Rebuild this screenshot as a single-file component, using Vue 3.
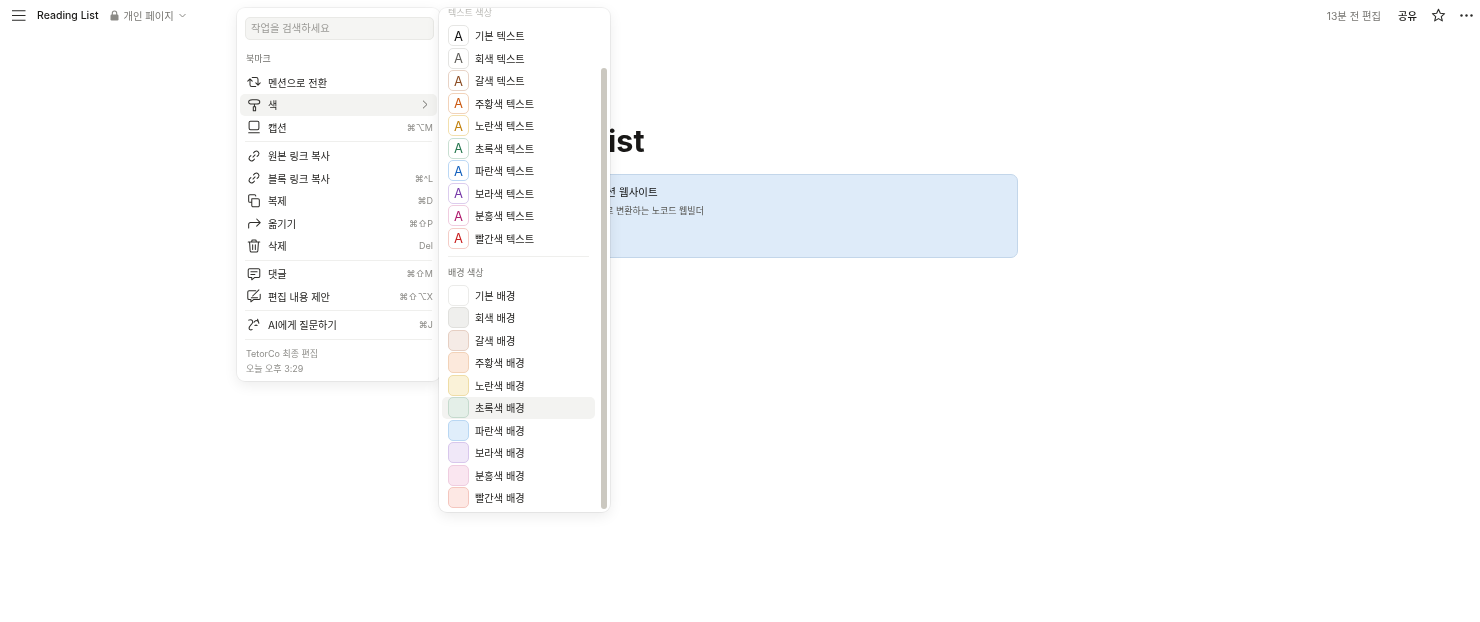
<script setup>
const I = {
  turn: 'M2 8l2.500-2.500L7 8M4.500 6v6A2 2 0 0 0 6.500 14H11M16 10l-2.500 2.500L11 10M13.500 12V6A2 2 0 0 0 11.500 4H7',
  color: 'M3 5.500C3 3.800 5 3 7 3h5c2 0 3.500 1 3.500 2.500S14 8 12 8H7C5 8 3 7.200 3 5.500zM9.500 8v3M8.200 11h2.600v4.500H8.200z',
  caption: 'M5 2.500h8A1.500 1.500 0 0 1 14.500 4v6.500A1.500 1.500 0 0 1 13 12H5a1.500 1.500 0 0 1-1.500-1.500V4A1.500 1.500 0 0 1 5 2.500zM3 15.500h12',
  link: 'M7.800 10.200l2.400-2.400M8.500 5.500l1.600-1.600a2.900 2.900 0 0 1 4 4l-1.600 1.600M9.500 12.500l-1.600 1.600a2.900 2.900 0 0 1-4-4l1.600-1.600',
  copy: 'M6.500 6.500h7A1.500 1.500 0 0 1 15 8v6a1.500 1.500 0 0 1-1.500 1.500h-5.500A1.500 1.500 0 0 1 6.500 14zM11 3.500V3.300A1.300 1.300 0 0 0 9.700 2H4.300A1.300 1.300 0 0 0 3 3.300v6A1.300 1.300 0 0 0 4.300 10.500H6.500',
  move: 'M3 14.500V10.500A2 2 0 0 1 5 8.500h11M12 4.500l4 4-4 4',
  trash: 'M2.500 4.500h13M6.500 4.500V3.300A1 1 0 0 1 7.500 2.300h3a1 1 0 0 1 1 1v1.200M4 4.500l.7 10a1.500 1.500 0 0 0 1.500 1.300h5.600a1.500 1.500 0 0 0 1.500-1.300l.7-10M7.500 7.500v5.500M10.500 7.500v5.500',
  comment: 'M4 3h10a1.500 1.500 0 0 1 1.500 1.500v7A1.500 1.500 0 0 1 14 13H9.500l-3 2.500V13H4a1.500 1.500 0 0 1-1.500-1.500v-7A1.500 1.500 0 0 1 4 3zM5.500 6.500h7M5.500 9.500h4.500',
  suggest: 'M11 3H3.500A1.500 1.500 0 0 0 2 4.500v7A1.500 1.500 0 0 0 3.500 13h2v2.500L8.500 13h6a1.500 1.500 0 0 0 1.500-1.500V7M6 11h7M7.500 9 14.500 2',
  ai: 'M3 3.500c2.500-1 5 0 4.500 2.500S3 10 3.500 13c.3 1.500 2 2 3.500 1M9 6c1-2 2.500-2.500 4-1.500M13 2.500 14.500 7M10 9.500c1-.5 1.700-.5 2.500 0'
};
const menuGroups = [
  [['turn', '멘션으로 전환', ''], ['color', '색', '>'], ['caption', '캡션', '⌘⌥M']],
  [['link', '원본 링크 복사', ''], ['link', '블록 링크 복사', '⌘^L'], ['copy', '복제', '⌘D'], ['move', '옮기기', '⌘⇧P'], ['trash', '삭제', 'Del']],
  [['comment', '댓글', '⌘⇧M'], ['suggest', '편집 내용 제안', '⌘⇧⌥X']],
  [['ai', 'AI에게 질문하기', '⌘J']]
];
const names = ['기본', '회색', '갈색', '주황색', '노란색', '초록색', '파란색', '보라색', '분홍색', '빨간색'];
const textColors = [
  ['#111111', '#e6e6e4'], ['#5f5e5a', '#e4e4e2'], ['#8a4b22', '#e8d3c6'], ['#cc5a12', '#f2d3ba'], ['#c2820f', '#f3e0ae'],
  ['#27774f', '#c9dfd2'], ['#1360bd', '#bcd8f5'], ['#7739a8', '#dccdee'], ['#b01c6e', '#f0cde0'], ['#c81f1f', '#f4cdc7']
];
const bgColors = [
  ['#ffffff', '#ebebe9'], ['#efefed', '#e0e0dd'], ['#f5ebe6', '#e6cfc3'], ['#fce9dc', '#f2d2b8'], ['#faf2d8', '#efdda6'],
  ['#e4efe8', '#c5dacd'], ['#e0eefb', '#b9d7f3'], ['#f0e8f8', '#d8c7ec'], ['#fae6f0', '#efcde0'], ['#fde8e4', '#f4c6be']
];
</script>

<template>
  <div class="page">
    <header class="topbar">
      <div class="left">
        <svg class="burger" width="14" height="11" viewBox="0 0 14 11"><path d="M0 .75h13.500M0 5.500h13.500M0 10.250h13.500" stroke="#2a2a28" stroke-width="1.200" fill="none"/></svg>
        <span class="doc">Reading List</span>
        <svg class="lock" width="9" height="11" viewBox="0 0 9 11"><path d="M2.300 5V3.200a2.200 2.200 0 0 1 4.400 0V5" stroke="#8b8a86" stroke-width="1.100" fill="none"/><rect x=".5" y="4.500" width="8" height="6" rx="1.200" fill="#8b8a86"/></svg>
        <span class="crumb">개인 페이지</span>
        <svg width="7" height="5" viewBox="0 0 7 5"><path d="M.5 1l3 3 3-3" stroke="#8b8a86" fill="none"/></svg>
      </div>
      <div class="right">
        <span class="edited">13분 전 편집</span>
        <span class="share">공유</span>
        <svg class="star" width="15" height="15" viewBox="0 0 15 15"><path d="M7.500 1.300l1.800 4 4.300.4-3.300 2.900 1 4.300-3.800-2.300-3.800 2.300 1-4.300L1.400 5.700l4.300-.4z" stroke="#2a2a28" stroke-width="1.100" fill="none" stroke-linejoin="round"/></svg>
        <svg width="13" height="3" viewBox="0 0 13 3"><circle cx="1.500" cy="1.500" r="1.200" fill="#2a2a28"/><circle cx="6.500" cy="1.500" r="1.200" fill="#2a2a28"/><circle cx="11.500" cy="1.500" r="1.200" fill="#2a2a28"/></svg>
      </div>
    </header>

    <main class="content">
      <h1 class="title">Reading List</h1>
      <div class="card">
        <div class="card-title">Oopy - 노션으로 만드는 노션 웹사이트</div>
        <div class="card-desc">노션 페이지를 손쉽게 웹사이트로 변환하는 노코드 웹빌더</div>
      </div>
    </main>

    <aside class="menu">
      <div class="search">작업을 검색하세요</div>
      <div class="label">북마크</div>
      <template v-for="(group, g) in menuGroups" :key="g">
        <div class="group">
          <div v-for="item in group" :key="item[1]" class="item" :class="{ hover: item[1] === '색' }">
            <svg class="icon" width="16" height="16" viewBox="0 0 18 18"><path :d="I[item[0]]" fill="none" stroke="#2f2e2b" stroke-width="1.150" stroke-linecap="round" stroke-linejoin="round"/></svg>
            <span class="item-text">{{ item[1] }}</span>
            <svg v-if="item[2] === '>'" class="chev" width="6" height="9" viewBox="0 0 6 9"><path d="M1 .7l4 3.800-4 3.800" stroke="#6d6c68" fill="none"/></svg>
            <span v-else class="key">{{ item[2] }}</span>
          </div>
        </div>
      </template>
      <div class="foot">
        <div>TetorCo 최종 편집</div>
        <div>오늘 오후 3:29</div>
      </div>
    </aside>

    <aside class="sub">
      <div class="sub-inner">
        <div class="sub-label top-label">텍스트 색상</div>
        <div v-for="(c, i) in textColors" :key="i" class="sub-row">
          <span class="swatch" :style="{ color: c[0], borderColor: c[1] }">A</span>
          <span>{{ names[i] }} 텍스트</span>
        </div>
        <div class="sub-sep"></div>
        <div class="sub-label">배경 색상</div>
        <div v-for="(c, i) in bgColors" :key="'b' + i" class="sub-row" :class="{ hover: i === 5 }">
          <span class="swatch" :style="{ background: c[0], borderColor: c[1] }"></span>
          <span>{{ names[i] }} 배경</span>
        </div>
      </div>
      <div class="scroll"></div>
    </aside>
  </div>
</template>

<style scoped>
.page {
  position: relative;
  height: 622px;
  overflow: hidden;
  background: #fff;
  font-family: Inter, "Noto Sans CJK KR", "DejaVu Sans", sans-serif;
  color: #1d1c1a;
}
.topbar {
  height: 30px;
  display: flex;
  justify-content: space-between;
  align-items: center;
  padding: 0 7px 0 12px;
  will-change: opacity;
}
.left, .right { display: flex; align-items: center; }
.burger { margin-right: 11px; }
.doc { font-size: 10.500px; font-weight: 500; margin-right: 11px; }
.lock { margin-right: 4px; margin-left: 1px; }
.crumb { font-size: 10.300px; color: #777672; margin-right: 5px; }
.edited { font-size: 10.300px; color: #777672; margin-right: 17px; }
.share { font-size: 10.300px; font-weight: 500; margin-right: 14px; }
.star { margin-right: 14px; }
.content { width: 556px; margin: 0 auto; will-change: opacity; }
.title {
  margin: 93px 0 0;
  font-size: 30.500px;
  line-height: 36px;
  font-weight: 700;
  color: #191817;
}
.card {
  height: 84px;
  margin-top: 15px;
  box-sizing: border-box;
  padding: 10px 12px 10px 23px;
  background: #deebf9;
  border: 1px solid #c3d6ea;
  border-radius: 7px;
}
.card-title { font-size: 10.500px; font-weight: 400; line-height: 15px; color: #111; }
.card-desc { font-size: 9px; line-height: 13px; color: #54534f; margin: 4px 0 0 4px; }

.menu {
  position: absolute;
  left: 237px;
  top: 8px;
  width: 203px;
  height: 373px;
  box-sizing: border-box;
  padding: 9px 3px 0;
  background: #fff;
  border-radius: 8px;
  box-shadow: 0 0 0 1px rgba(0, 0, 0, .05), 0 4px 14px rgba(0, 0, 0, .08);
  will-change: opacity;
}
.search {
  height: 23px;
  box-sizing: border-box;
  margin: 0 3px 0 5px;
  padding-left: 5px;
  font-size: 10.300px;
  line-height: 21px;
  color: #9b9a96;
  background: #f5f5f3;
  border: 1px solid #e9e9e6;
  border-radius: 5px;
}
.label { font-size: 9px; line-height: 13px; color: #6e6d69; margin: 12px 0 6px 6px; }
.group { border-bottom: 1px solid #efefed; padding-bottom: 2.750px; margin: 0 5px 2px; }
.item {
  height: 22.500px;
  display: flex;
  align-items: center;
  margin: 0 -5px;
  padding: 0 4px 0 5px;
  border-radius: 5px;
}
.item.hover { background: #f3f3f1; }
.icon { flex: none; margin-right: 6px; margin-left: 1px; }
.item-text { flex: 1; font-size: 10.200px; color: #242321; }
.key { font-size: 9px; color: #8e8d89; }
.chev { margin-right: 5px; margin-left: auto; }
.foot { font-size: 9px; line-height: 15px; color: #8e8d89; padding: 4.500px 6px; }

.sub {
  position: absolute;
  left: 439px;
  top: 8px;
  width: 171px;
  height: 504px;
  overflow: hidden;
  background: #fff;
  border-radius: 8px;
  box-shadow: 0 0 0 1px rgba(0, 0, 0, .06), 0 4px 14px rgba(0, 0, 0, .08);
  will-change: opacity;
}
.sub-inner { padding: 0 15px 0 3px; margin-top: -2px; }
.sub-label { font-size: 9px; line-height: 13px; color: #6e6d69; margin: 8.500px 0 5.500px 6px; }
.top-label { color: #b9b8b4; margin: 0 0 5.500px 6px; }
.sub-row {
  height: 22.500px;
  display: flex;
  align-items: center;
  gap: 6px;
  padding-left: 6px;
  font-size: 10.200px;
  color: #242321;
  border-radius: 5px;
}
.sub-row.hover { background: #f3f3f1; }
.swatch {
  flex: none;
  width: 21px;
  height: 21px;
  box-sizing: border-box;
  display: flex;
  align-items: center;
  justify-content: center;
  font-size: 13px;
  border: 1px solid;
  border-radius: 5px;
}
.sub-sep { height: 1px; background: #efefed; margin: 6.500px 6px 0; }
.scroll {
  position: absolute;
  left: 162px;
  top: 60px;
  width: 6px;
  height: 441px;
  border-radius: 3px;
  background: #cbc8c0;
}
</style>
